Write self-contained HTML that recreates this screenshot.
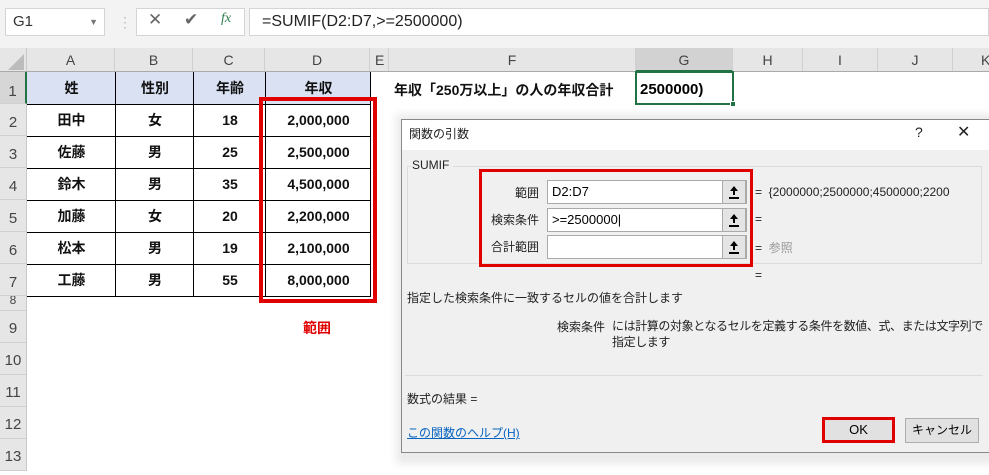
<!DOCTYPE html>
<html><head><meta charset="utf-8"><style>
*{box-sizing:border-box;margin:0;padding:0}
body{width:989px;height:458px;overflow:hidden;background:#fff;position:relative;font-family:"Liberation Sans","Noto Sans CJK JP",sans-serif;}
.a{position:absolute}
.ch{position:absolute;top:48px;height:24px;border-right:1px solid #d0d0d0;background:#e6e6e6;color:#444;font-size:14px;text-align:center;line-height:24px}
.rh{position:absolute;left:0;width:27px;border-bottom:1px solid #d0d0d0;background:#e6e6e6;color:#444;font-size:15px;text-align:center;border-right:1px solid #c8c8c8}
.c{position:absolute;font-size:14px;font-weight:bold;text-align:center;color:#111}
.dl{font-size:12px;color:#222;position:absolute}
.lb{font-size:12px;color:#222;position:absolute;right:450px;text-align:right}
.inp{position:absolute;left:547px;width:200px;height:24px;background:#fff;border:1px solid #aaa;font-size:13px;line-height:22px;padding-left:4px}
.btn{position:absolute;right:0;top:-1px;width:24px;height:24px;background:#e4e4e4;border:1px solid #aaa}
.btn::before{content:"";position:absolute;left:7px;top:5px;border-left:4px solid transparent;border-right:4px solid transparent;border-bottom:5px solid #000}
.btn::after{content:"";position:absolute;left:10px;top:9px;width:2px;height:5px;background:#000;box-shadow:0 6px 0 -0px transparent}
.btn i{position:absolute;left:6px;top:16px;width:10px;height:1.5px;background:#000}
</style></head><body>
<div class="a" style="left:0;top:0;width:989px;height:48px;background:#f3f3f3"></div>
<div class="a" style="left:5px;top:8px;width:100px;height:28px;background:#fff;border:1px solid #d4d4d4;font-size:15px;color:#333;line-height:26px;padding-left:7px">G1<span style="position:absolute;right:6px;top:0;font-size:9px;color:#777">▼</span></div>
<div class="a" style="left:118px;top:14px;color:#bbb;font-size:14px">⋮</div>
<div class="a" style="left:136px;top:8px;width:109px;height:28px;background:#fff;border:1px solid #d4d4d4"></div>
<div class="a" style="left:148px;top:10px;font-size:17px;color:#666">✕</div>
<div class="a" style="left:184px;top:10px;font-size:17px;color:#666">✔</div>
<div class="a" style="left:221px;top:11px;font-size:14px;color:#2e7d4f;font-style:italic;font-family:'Liberation Serif',serif">fx</div>
<div class="a" style="left:249px;top:8px;width:740px;height:28px;background:#fff;border:1px solid #d4d4d4;font-size:16px;line-height:26px;padding-left:12px;color:#222">=SUMIF(D2:D7,&gt;=2500000)</div>
<div class="a" style="left:0;top:48px;width:27px;height:24px;background:#e6e6e6;border-right:1px solid #c8c8c8"></div>
<div class="a" style="left:8px;top:54px;width:0;height:0;border-left:16px solid transparent;border-bottom:16px solid #bcbcbc"></div>
<div class="ch" style="left:27px;width:88px">A</div>
<div class="ch" style="left:115px;width:78px">B</div>
<div class="ch" style="left:193px;width:72px">C</div>
<div class="ch" style="left:265px;width:105px">D</div>
<div class="ch" style="left:370px;width:19px;text-align:left;padding-left:5px">E</div>
<div class="ch" style="left:389px;width:247px">F</div>
<div class="ch" style="left:636px;width:97px;background:#d2d2d2;border-bottom:2px solid #217346">G</div>
<div class="ch" style="left:733px;width:70px">H</div>
<div class="ch" style="left:803px;width:75px">I</div>
<div class="ch" style="left:878px;width:75px">J</div>
<div class="ch" style="left:953px;width:40px;text-align:left;padding-left:28px">K</div>
<div class="a" style="left:0;top:71px;width:989px;height:1px;background:#aaa"></div>
<div class="rh" style="top:72px;height:32px;line-height:40px;border-right:2px solid #217346;background:#d6d6d6">1</div>
<div class="rh" style="top:104px;height:32px;line-height:38px">2</div>
<div class="rh" style="top:136px;height:32px;line-height:38px">3</div>
<div class="rh" style="top:168px;height:32px;line-height:38px">4</div>
<div class="rh" style="top:200px;height:32px;line-height:38px">5</div>
<div class="rh" style="top:232px;height:32px;line-height:38px">6</div>
<div class="rh" style="top:264px;height:32px;line-height:38px">7</div>
<div class="rh" style="top:296px;height:15px;line-height:8px;font-size:12px;overflow:hidden">8</div>
<div class="rh" style="top:311px;height:32px;line-height:36px">9</div>
<div class="rh" style="top:343px;height:32px;line-height:36px">10</div>
<div class="rh" style="top:375px;height:32px;line-height:36px">11</div>
<div class="rh" style="top:407px;height:32px;line-height:36px">12</div>
<div class="rh" style="top:439px;height:32px;line-height:36px">13</div>
<div class="a" style="left:27px;top:72px;width:344px;height:32px;background:#d9e1f2"></div>
<div class="c" style="left:27px;top:72px;width:89px;height:32px;line-height:32px">姓</div>
<div class="c" style="left:116px;top:72px;width:78px;height:32px;line-height:32px">性別</div>
<div class="c" style="left:194px;top:72px;width:72px;height:32px;line-height:32px">年齢</div>
<div class="c" style="left:266px;top:72px;width:105px;height:32px;line-height:32px">年収</div>
<div class="a" style="left:115px;top:72px;width:1px;height:225px;background:#000"></div>
<div class="a" style="left:193px;top:72px;width:1px;height:225px;background:#000"></div>
<div class="a" style="left:265px;top:72px;width:1px;height:225px;background:#000"></div>
<div class="a" style="left:370px;top:72px;width:1px;height:225px;background:#000"></div>
<div class="a" style="left:27px;top:103.5px;width:344px;height:1.5px;background:#000"></div>
<div class="a" style="left:27px;top:135.5px;width:344px;height:1.5px;background:#000"></div>
<div class="a" style="left:27px;top:167.5px;width:344px;height:1.5px;background:#000"></div>
<div class="a" style="left:27px;top:199.5px;width:344px;height:1.5px;background:#000"></div>
<div class="a" style="left:27px;top:231.5px;width:344px;height:1.5px;background:#000"></div>
<div class="a" style="left:27px;top:263.5px;width:344px;height:1.5px;background:#000"></div>
<div class="a" style="left:27px;top:295.5px;width:344px;height:1.5px;background:#000"></div>
<div style="position:absolute;left:27px;top:104px;font-size:14px;font-weight:bold;color:#111">
<table style="border-collapse:collapse;text-align:center">
<tr style="height:32px"><td style="width:89px">田中</td><td style="width:78px">女</td><td style="width:72px">18</td><td style="width:105px">2,000,000</td></tr>
<tr style="height:32px"><td>佐藤</td><td>男</td><td>25</td><td>2,500,000</td></tr>
<tr style="height:32px"><td>鈴木</td><td>男</td><td>35</td><td>4,500,000</td></tr>
<tr style="height:32px"><td>加藤</td><td>女</td><td>20</td><td>2,200,000</td></tr>
<tr style="height:32px"><td>松本</td><td>男</td><td>19</td><td>2,100,000</td></tr>
<tr style="height:32px"><td>工藤</td><td>男</td><td>55</td><td>8,000,000</td></tr>
</table></div>
<div class="a" style="left:259px;top:97px;width:118px;height:206px;border:4px solid #e00000"></div>
<div class="a" style="left:303px;top:318px;font-size:14px;font-weight:bold;color:#e00000">範囲</div>
<div class="a" style="left:394px;top:80px;font-size:14px;font-weight:bold;color:#111">年収「250万以上」の人の年収合計</div>
<div class="a" style="left:635px;top:71px;width:99px;height:34px;border:2px solid #217346;font-size:15px;font-weight:bold;line-height:34px;padding-left:3px">2500000)</div>
<div class="a" style="left:730px;top:101px;width:6px;height:6px;background:#217346;border:1px solid #fff"></div>
<div class="a" style="left:396px;top:114px;width:600px;height:350px;background:rgba(0,0,0,0.08);filter:blur(4px)"></div>
<div class="a" style="left:401px;top:119px;width:600px;height:334px;background:#f0f0f0;border:1px solid #888"></div>
<div class="a" style="left:402px;top:120px;width:590px;height:30px;background:#fff"></div>
<div class="dl" style="left:409px;top:125px">関数の引数</div>
<div class="dl" style="left:915px;top:124px;font-size:14px">?</div>
<div class="dl" style="left:957px;top:122px;font-size:16px">✕</div>
<div class="a" style="left:407px;top:166px;width:575px;height:98px;border:1px solid #dcdcdc"></div>
<div class="dl" style="left:412px;top:158px;background:#f0f0f0;padding-right:4px">SUMIF</div>
<div class="lb" style="top:184px">範囲</div>
<div class="lb" style="top:211px">検索条件</div>
<div class="lb" style="top:238px">合計範囲</div>
<div class="inp" style="top:180px">D2:D7<div class="btn"><i></i></div></div>
<div class="inp" style="top:208px">&gt;=2500000|<div class="btn"><i></i></div></div>
<div class="inp" style="top:235px"><div class="btn"><i></i></div></div>
<div class="dl" style="left:755px;top:185px;white-space:nowrap">=&nbsp;&nbsp;{2000000;2500000;4500000;2200</div>
<div class="dl" style="left:755px;top:212px">=</div>
<div class="dl" style="left:755px;top:239px">=&nbsp;&nbsp;<span style="color:#999">参照</span></div>
<div class="dl" style="left:755px;top:268px">=</div>
<div class="a" style="left:479px;top:169px;width:274px;height:98px;border:3px solid #e00000"></div>
<div class="dl" style="left:407px;top:289px">指定した検索条件に一致するセルの値を合計します</div>
<div class="dl" style="left:557px;top:318px">検索条件</div>
<div class="dl" style="left:612px;top:318px;line-height:16px;width:376px;letter-spacing:-0.4px">には計算の対象となるセルを定義する条件を数値、式、または文字列で指定します</div>
<div class="a" style="left:405px;top:375px;width:578px;height:1px;background:#dcdcdc"></div>
<div class="dl" style="left:407px;top:390px">数式の結果 =</div>
<div class="dl" style="left:407px;top:424px;color:#0563c1;text-decoration:underline">この関数のヘルプ(H)</div>
<div class="a" style="left:822px;top:417px;width:73px;height:26px;background:#e1e1e1;border:3px solid #e00000;font-size:13px;text-align:center;line-height:20px">OK</div>
<div class="a" style="left:905px;top:418px;width:74px;height:25px;background:#e1e1e1;border:1px solid #adadad;font-size:12px;text-align:center;line-height:23px">キャンセル</div>
</body></html>
